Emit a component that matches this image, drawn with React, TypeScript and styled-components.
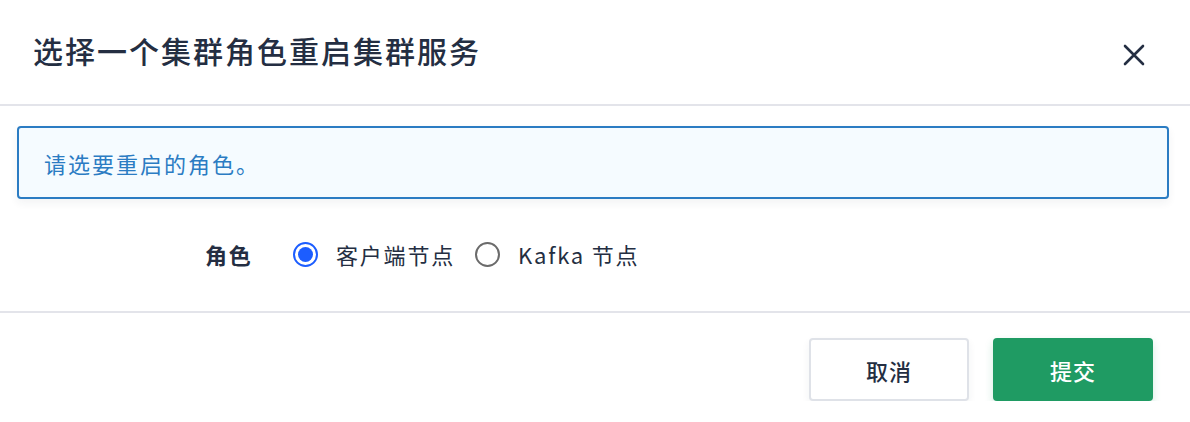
import { FC, useState } from 'react'
import styled, { createGlobalStyle } from 'styled-components'

const GlobalStyle = createGlobalStyle`
  html, body {
    margin: 0;
    padding: 0;
    background: #fff;
    font-family: "Noto Sans CJK SC", "Noto Sans", "Liberation Sans", sans-serif;
  }
  * {
    box-sizing: border-box;
  }
`

const Dialog = styled.div`
  width: 1190px;
  background: #fff;
  color: #242e42;
`

const Header = styled.div`
  height: 106px;
  padding: 0 44px 4px 33px;
  display: flex;
  align-items: center;
  justify-content: space-between;
  border-bottom: 2px solid #e3e4ea;
  h2 {
    margin: 0;
    font-size: 30px;
    font-weight: 500;
    letter-spacing: 2px;
    color: #242e42;
  }
`

const CloseButton = styled.button`
  width: 24px;
  height: 24px;
  padding: 0;
  border: none;
  background: none;
  cursor: pointer;
  display: flex;
  align-items: center;
  justify-content: center;
  margin-top: 10px;
`

const Body = styled.div`
  padding: 20px 21px 37px 17px;
  border-bottom: 2px solid #e3e4ea;
`

const InfoBox = styled.div`
  height: 73px;
  border: 2px solid #2b7cc3;
  border-radius: 4px;
  background: #f5fbff;
  box-shadow: 0 4px 8px rgba(36, 46, 66, 0.06);
  padding: 0 25px;
  display: flex;
  align-items: center;
  font-size: 22px;
  letter-spacing: 2px;
  color: #2b7cc3;
`

const FormRow = styled.div`
  margin-top: 35px;
  height: 40px;
  padding-left: 188px;
  display: flex;
  align-items: center;
`

const Label = styled.span`
  width: 88px;
  font-size: 22px;
  font-weight: 700;
  letter-spacing: 1.8px;
  color: #242e42;
`

const RadioItem = styled.label`
  display: flex;
  align-items: center;
  margin-right: 20px;
  font-size: 22px;
  letter-spacing: 1.8px;
  color: #242e42;
  cursor: pointer;
`

const RadioCircle = styled.span<{ $checked: boolean }>`
  width: 25px;
  height: 25px;
  border-radius: 50%;
  border: 2px solid ${(p) => (p.$checked ? '#1c5dff' : '#6b6b6b')};
  margin-right: 18px;
  display: flex;
  align-items: center;
  justify-content: center;
  &::after {
    content: '';
    width: 15px;
    height: 15px;
    border-radius: 50%;
    background: ${(p) => (p.$checked ? '#1c5dff' : 'transparent')};
  }
`

const Footer = styled.div`
  padding: 25px 37px 0 0;
  display: flex;
  justify-content: flex-end;
  gap: 24px;
`

const Button = styled.button<{ $primary?: boolean }>`
  width: 160px;
  height: 63px;
  border-radius: 4px;
  font-family: inherit;
  font-size: 22px;
  font-weight: 500;
  letter-spacing: 1px;
  cursor: pointer;
  border: ${(p) => (p.$primary ? 'none' : '2px solid #dfe2e8')};
  background: ${(p) => (p.$primary ? '#1f9b63' : '#fff')};
  color: ${(p) => (p.$primary ? '#fff' : '#242e42')};
  box-shadow: ${(p) =>
    p.$primary ? '0 4px 8px rgba(31, 155, 99, 0.2)' : '0 4px 8px rgba(36, 46, 66, 0.06)'};
`

const roles = [
  { key: 'client', name: '客户端节点' },
  { key: 'kafka', name: 'Kafka 节点' }
]

const App: FC = () => {
  const [role, setRole] = useState('client')
  return (
    <>
      <GlobalStyle />
      <Dialog>
        <Header>
          <h2>选择一个集群角色重启集群服务</h2>
          <CloseButton title="close">
            <svg width="22" height="22" viewBox="0 0 22 22">
              <path d="M2 2 L20 20 M20 2 L2 20" stroke="#242e42" strokeWidth="2.6" strokeLinecap="round" />
            </svg>
          </CloseButton>
        </Header>
        <Body>
          <InfoBox>请选要重启的角色。</InfoBox>
          <FormRow>
            <Label>角色</Label>
            {roles.map((r) => (
              <RadioItem key={r.key} onClick={() => setRole(r.key)}>
                <RadioCircle $checked={role === r.key} />
                {r.name}
              </RadioItem>
            ))}
          </FormRow>
        </Body>
        <Footer>
          <Button>取消</Button>
          <Button $primary>提交</Button>
        </Footer>
      </Dialog>
    </>
  )
}

export default App
